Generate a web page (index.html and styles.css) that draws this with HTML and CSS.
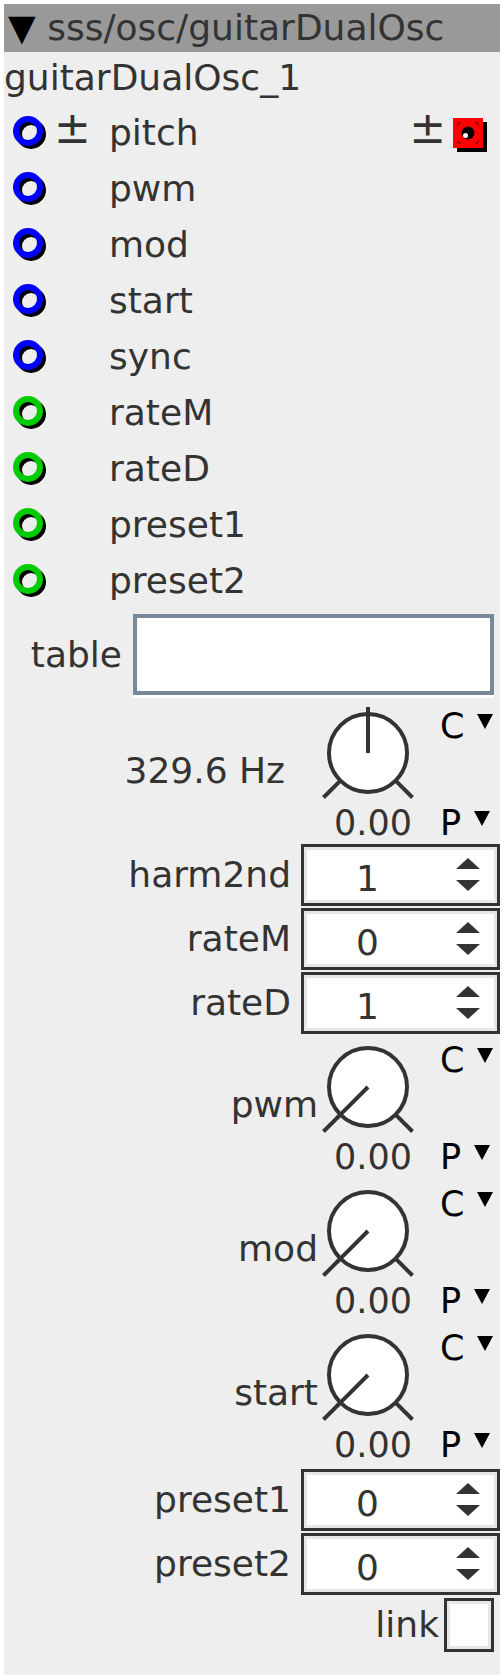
FILE: index.html
```html
<!DOCTYPE html>
<html lang="en">
<head>
    <meta charset="UTF-8">
    <meta name="viewport" content="width=device-width, initial-scale=1.0">
    <title>sss/osc/guitarDualOsc</title>
    <link rel="stylesheet" href="styles.css">
</head>
<body>
    <svg class="defs" width="0" height="0">
        <symbol id="jack" viewBox="0 0 36 36">
            <circle cx="20" cy="20" r="12" fill="none" stroke="#000" stroke-width="6"/>
            <circle cx="17" cy="17" r="12" fill="none" stroke="currentColor" stroke-width="6"/>
        </symbol>
        <symbol id="dial" viewBox="0 0 100 100">
            <line x1="22.4" y1="77.6" x2="5.5" y2="94.5" stroke="#333" stroke-width="4"/>
            <line x1="77.6" y1="77.6" x2="94.5" y2="94.5" stroke="#333" stroke-width="4"/>
            <circle cx="50" cy="50" r="39" fill="#fff" stroke="#333" stroke-width="4"/>
        </symbol>
        <symbol id="arrows" viewBox="0 0 24 34">
            <polygon points="0,11 12,0 24,11" fill="#333"/>
            <polygon points="0,22 24,22 12,33" fill="#333"/>
        </symbol>
    </svg>

    <div class="node">
        <div class="node-head"><span class="fold">▼</span> sss/osc/guitarDualOsc</div>
        <div class="node-title">guitarDualOsc_1</div>

        <div class="ports">
            <div class="port">
                <svg class="jack blue"><use href="#jack"/></svg>
                <span class="pm">±</span>
                <span class="port-name">pitch</span>
                <span class="pm pm-out">±</span>
                <svg class="out-jack" viewBox="0 0 36 40">
                    <rect x="5" y="10" width="30" height="30" fill="#000"/>
                    <rect x="1" y="6" width="30" height="30" fill="#f00"/>
                    <path d="M6 14v-3h3M23 11h3v3M26 28v3h-3M9 31h-3v-3" fill="none" stroke="#600" stroke-width="1"/>
                    <circle cx="16" cy="21" r="6.5" fill="#000"/>
                    <circle cx="13.5" cy="23.5" r="2.5" fill="#fff"/>
                </svg>
            </div>
            <div class="port">
                <svg class="jack blue"><use href="#jack"/></svg>
                <span class="pm"></span>
                <span class="port-name">pwm</span>
            </div>
            <div class="port">
                <svg class="jack blue"><use href="#jack"/></svg>
                <span class="pm"></span>
                <span class="port-name">mod</span>
            </div>
            <div class="port">
                <svg class="jack blue"><use href="#jack"/></svg>
                <span class="pm"></span>
                <span class="port-name">start</span>
            </div>
            <div class="port">
                <svg class="jack blue"><use href="#jack"/></svg>
                <span class="pm"></span>
                <span class="port-name">sync</span>
            </div>
            <div class="port">
                <svg class="jack green"><use href="#jack"/></svg>
                <span class="pm"></span>
                <span class="port-name">rateM</span>
            </div>
            <div class="port">
                <svg class="jack green"><use href="#jack"/></svg>
                <span class="pm"></span>
                <span class="port-name">rateD</span>
            </div>
            <div class="port">
                <svg class="jack green"><use href="#jack"/></svg>
                <span class="pm"></span>
                <span class="port-name">preset1</span>
            </div>
            <div class="port">
                <svg class="jack green"><use href="#jack"/></svg>
                <span class="pm"></span>
                <span class="port-name">preset2</span>
            </div>
        </div>

        <div class="field">
            <span class="field-label">table</span>
            <div class="text-box"></div>
        </div>

        <div class="knob freq">
            <div class="knob-label">329.6 Hz</div>
            <div class="knob-dial">
                <svg viewBox="0 0 100 100"><use href="#dial"/><line x1="50" y1="50" x2="50" y2="4" stroke="#333" stroke-width="4"/></svg>
                <div class="knob-value">0.00</div>
            </div>
            <div class="knob-side"><span>C<i class="tri"></i></span><span>P<i class="tri"></i></span></div>
        </div>

        <div class="spin-group">
            <div class="spin-row">
                <span class="spin-label">harm2nd</span>
                <div class="spin"><span class="spin-value">1</span><svg class="spin-arrows"><use href="#arrows"/></svg></div>
            </div>
            <div class="spin-row">
                <span class="spin-label">rateM</span>
                <div class="spin"><span class="spin-value">0</span><svg class="spin-arrows"><use href="#arrows"/></svg></div>
            </div>
            <div class="spin-row">
                <span class="spin-label">rateD</span>
                <div class="spin"><span class="spin-value">1</span><svg class="spin-arrows"><use href="#arrows"/></svg></div>
            </div>
        </div>

        <div class="knob">
            <div class="knob-label">pwm</div>
            <div class="knob-dial">
                <svg viewBox="0 0 100 100"><use href="#dial"/><line x1="50" y1="50" x2="18.9" y2="81.1" stroke="#333" stroke-width="4"/></svg>
                <div class="knob-value">0.00</div>
            </div>
            <div class="knob-side"><span>C<i class="tri"></i></span><span>P<i class="tri"></i></span></div>
        </div>

        <div class="knob">
            <div class="knob-label">mod</div>
            <div class="knob-dial">
                <svg viewBox="0 0 100 100"><use href="#dial"/><line x1="50" y1="50" x2="18.9" y2="81.1" stroke="#333" stroke-width="4"/></svg>
                <div class="knob-value">0.00</div>
            </div>
            <div class="knob-side"><span>C<i class="tri"></i></span><span>P<i class="tri"></i></span></div>
        </div>

        <div class="knob">
            <div class="knob-label">start</div>
            <div class="knob-dial">
                <svg viewBox="0 0 100 100"><use href="#dial"/><line x1="50" y1="50" x2="18.9" y2="81.1" stroke="#333" stroke-width="4"/></svg>
                <div class="knob-value">0.00</div>
            </div>
            <div class="knob-side"><span>C<i class="tri"></i></span><span>P<i class="tri"></i></span></div>
        </div>

        <div class="spin-group last">
            <div class="spin-row">
                <span class="spin-label">preset1</span>
                <div class="spin"><span class="spin-value">0</span><svg class="spin-arrows"><use href="#arrows"/></svg></div>
            </div>
            <div class="spin-row">
                <span class="spin-label">preset2</span>
                <div class="spin"><span class="spin-value">0</span><svg class="spin-arrows"><use href="#arrows"/></svg></div>
            </div>
        </div>

        <div class="check-row">
            <span class="check-label">link</span>
            <div class="check"></div>
        </div>
    </div>
</body>
</html>
```

FILE: styles.css
```css
body {
    margin: 4px;
    background: #fff;
    font-family: "DejaVu Sans", "Liberation Sans", sans-serif;
    font-size: 36px;
    color: #333;
}

.defs {
    position: absolute;
    width: 0;
    height: 0;
}

.node {
    width: 496px;
    background: #eee;
    padding-bottom: 23px;
}

.node-head {
    height: 48px;
    line-height: 48px;
    padding-left: 4px;
    background: #999;
    white-space: nowrap;
    overflow: hidden;
}

.fold {
    color: #000;
}

.node-title {
    line-height: 52px;
}

/* ports */

.port {
    display: flex;
    align-items: center;
    height: 56px;
}

.jack {
    width: 36px;
    height: 36px;
    margin-left: 7px;
    flex: none;
}

.jack.blue {
    color: #00f;
}

.jack.green {
    color: #00cc00;
}

.pm {
    width: 55px;
    margin: 0 0 8px 7px;
    flex: none;
    font-size: 44px;
    line-height: 48px;
}

.pm-out {
    width: auto;
    margin-left: auto;
}

.out-jack {
    width: 36px;
    height: 40px;
    margin: 0 12px 0 6px;
    flex: none;
}

/* table field */

.field {
    display: flex;
    align-items: center;
    justify-content: flex-end;
    margin: 6px 6px 8px 0;
}

.field-label {
    margin-right: 11px;
}

.text-box {
    box-sizing: border-box;
    width: 361px;
    height: 81px;
    background: #fff;
    border: 4px solid #778899;
    box-shadow: 0 3px 0 #fff;
}

/* knobs */

.knob {
    display: grid;
    grid-template-columns: 1fr 100px 82px;
    height: 144px;
}

.knob.freq {
    height: 141px;
}

.knob-label {
    padding-top: 48px;
    line-height: 40px;
    text-align: right;
}

.freq .knob-label {
    margin-right: 33px;
}

.knob-dial svg {
    display: block;
    width: 100px;
    height: 100px;
}

.knob-value {
    padding-right: 6px;
    font-size: 35px;
    line-height: 40px;
    text-align: right;
}

.knob-side {
    display: flex;
    flex-direction: column;
    gap: 57px;
    padding: 3px 0 0 22px;
    color: #000;
    font-size: 35px;
    line-height: 40px;
}

.tri {
    display: inline-block;
    width: 0;
    height: 0;
    margin-left: 13px;
    border-left: 8px solid transparent;
    border-right: 8px solid transparent;
    border-top: 15px solid #000;
    vertical-align: 9px;
}

/* spin boxes */

.spin-group {
    display: flex;
    flex-direction: column;
    gap: 2px;
    margin-bottom: 3px;
}

.spin-group.last {
    margin-bottom: 0;
}

.spin-row {
    display: flex;
    align-items: center;
    justify-content: flex-end;
}

.spin-label {
    margin-right: 10px;
    line-height: 62px;
}

.spin {
    box-sizing: border-box;
    display: flex;
    align-items: center;
    width: 199px;
    height: 62px;
    background: #fff;
    border: 3px solid #333;
    box-shadow: inset 0 0 0 3px #e6e6e6;
}

.spin-value {
    flex: 1;
    padding-top: 6px;
    text-align: center;
}

.spin-arrows {
    width: 24px;
    height: 34px;
    margin: 0 17px 0 25px;
    flex: none;
}

/* checkbox */

.check-row {
    display: flex;
    align-items: center;
    justify-content: flex-end;
    margin: 3px 6px 0 0;
}

.check-label {
    margin-right: 5px;
    line-height: 40px;
}

.check {
    box-sizing: border-box;
    width: 50px;
    height: 54px;
    background: #fff;
    border: 3px solid #333;
    box-shadow: inset 0 0 0 3px #e6e6e6;
}
```
